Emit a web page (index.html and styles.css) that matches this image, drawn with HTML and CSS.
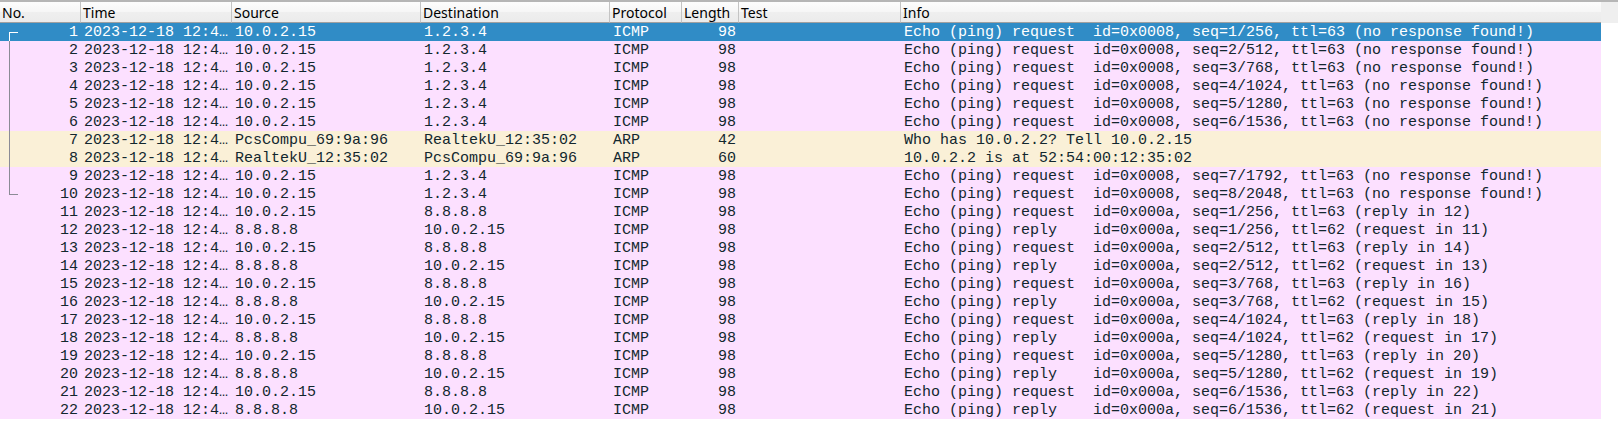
FILE: index.html
```html
<!DOCTYPE html>
<html lang="en">
<head>
<meta charset="utf-8">
<title>Packet list</title>
<link rel="stylesheet" href="styles.css">
</head>
<body>
<main class="packet-list">
<table class="packets">
<colgroup><col class="col-no"><col class="col-time"><col class="col-addr"><col class="col-addr"><col class="col-protocol"><col class="col-length"><col class="col-test"><col></colgroup>
<thead>
<tr><th>No.</th><th>Time</th><th>Source</th><th>Destination</th><th>Protocol</th><th>Length</th><th>Test</th><th>Info</th></tr>
</thead>
<tbody>
<tr class="selected"><td class="num link-start">1</td><td>2023-12-18 12:4…</td><td>10.0.2.15</td><td>1.2.3.4</td><td>ICMP</td><td class="num">98</td><td></td><td>Echo (ping) request  id=0x0008, seq=1/256, ttl=63 (no response found!)</td></tr>
<tr><td class="num link">2</td><td>2023-12-18 12:4…</td><td>10.0.2.15</td><td>1.2.3.4</td><td>ICMP</td><td class="num">98</td><td></td><td>Echo (ping) request  id=0x0008, seq=2/512, ttl=63 (no response found!)</td></tr>
<tr><td class="num link">3</td><td>2023-12-18 12:4…</td><td>10.0.2.15</td><td>1.2.3.4</td><td>ICMP</td><td class="num">98</td><td></td><td>Echo (ping) request  id=0x0008, seq=3/768, ttl=63 (no response found!)</td></tr>
<tr><td class="num link">4</td><td>2023-12-18 12:4…</td><td>10.0.2.15</td><td>1.2.3.4</td><td>ICMP</td><td class="num">98</td><td></td><td>Echo (ping) request  id=0x0008, seq=4/1024, ttl=63 (no response found!)</td></tr>
<tr><td class="num link">5</td><td>2023-12-18 12:4…</td><td>10.0.2.15</td><td>1.2.3.4</td><td>ICMP</td><td class="num">98</td><td></td><td>Echo (ping) request  id=0x0008, seq=5/1280, ttl=63 (no response found!)</td></tr>
<tr><td class="num link">6</td><td>2023-12-18 12:4…</td><td>10.0.2.15</td><td>1.2.3.4</td><td>ICMP</td><td class="num">98</td><td></td><td>Echo (ping) request  id=0x0008, seq=6/1536, ttl=63 (no response found!)</td></tr>
<tr class="arp"><td class="num link">7</td><td>2023-12-18 12:4…</td><td>PcsCompu_69:9a:96</td><td>RealtekU_12:35:02</td><td>ARP</td><td class="num">42</td><td></td><td>Who has 10.0.2.2? Tell 10.0.2.15</td></tr>
<tr class="arp"><td class="num link">8</td><td>2023-12-18 12:4…</td><td>RealtekU_12:35:02</td><td>PcsCompu_69:9a:96</td><td>ARP</td><td class="num">60</td><td></td><td>10.0.2.2 is at 52:54:00:12:35:02</td></tr>
<tr><td class="num link">9</td><td>2023-12-18 12:4…</td><td>10.0.2.15</td><td>1.2.3.4</td><td>ICMP</td><td class="num">98</td><td></td><td>Echo (ping) request  id=0x0008, seq=7/1792, ttl=63 (no response found!)</td></tr>
<tr><td class="num link-end">10</td><td>2023-12-18 12:4…</td><td>10.0.2.15</td><td>1.2.3.4</td><td>ICMP</td><td class="num">98</td><td></td><td>Echo (ping) request  id=0x0008, seq=8/2048, ttl=63 (no response found!)</td></tr>
<tr><td class="num">11</td><td>2023-12-18 12:4…</td><td>10.0.2.15</td><td>8.8.8.8</td><td>ICMP</td><td class="num">98</td><td></td><td>Echo (ping) request  id=0x000a, seq=1/256, ttl=63 (reply in 12)</td></tr>
<tr><td class="num">12</td><td>2023-12-18 12:4…</td><td>8.8.8.8</td><td>10.0.2.15</td><td>ICMP</td><td class="num">98</td><td></td><td>Echo (ping) reply    id=0x000a, seq=1/256, ttl=62 (request in 11)</td></tr>
<tr><td class="num">13</td><td>2023-12-18 12:4…</td><td>10.0.2.15</td><td>8.8.8.8</td><td>ICMP</td><td class="num">98</td><td></td><td>Echo (ping) request  id=0x000a, seq=2/512, ttl=63 (reply in 14)</td></tr>
<tr><td class="num">14</td><td>2023-12-18 12:4…</td><td>8.8.8.8</td><td>10.0.2.15</td><td>ICMP</td><td class="num">98</td><td></td><td>Echo (ping) reply    id=0x000a, seq=2/512, ttl=62 (request in 13)</td></tr>
<tr><td class="num">15</td><td>2023-12-18 12:4…</td><td>10.0.2.15</td><td>8.8.8.8</td><td>ICMP</td><td class="num">98</td><td></td><td>Echo (ping) request  id=0x000a, seq=3/768, ttl=63 (reply in 16)</td></tr>
<tr><td class="num">16</td><td>2023-12-18 12:4…</td><td>8.8.8.8</td><td>10.0.2.15</td><td>ICMP</td><td class="num">98</td><td></td><td>Echo (ping) reply    id=0x000a, seq=3/768, ttl=62 (request in 15)</td></tr>
<tr><td class="num">17</td><td>2023-12-18 12:4…</td><td>10.0.2.15</td><td>8.8.8.8</td><td>ICMP</td><td class="num">98</td><td></td><td>Echo (ping) request  id=0x000a, seq=4/1024, ttl=63 (reply in 18)</td></tr>
<tr><td class="num">18</td><td>2023-12-18 12:4…</td><td>8.8.8.8</td><td>10.0.2.15</td><td>ICMP</td><td class="num">98</td><td></td><td>Echo (ping) reply    id=0x000a, seq=4/1024, ttl=62 (request in 17)</td></tr>
<tr><td class="num">19</td><td>2023-12-18 12:4…</td><td>10.0.2.15</td><td>8.8.8.8</td><td>ICMP</td><td class="num">98</td><td></td><td>Echo (ping) request  id=0x000a, seq=5/1280, ttl=63 (reply in 20)</td></tr>
<tr><td class="num">20</td><td>2023-12-18 12:4…</td><td>8.8.8.8</td><td>10.0.2.15</td><td>ICMP</td><td class="num">98</td><td></td><td>Echo (ping) reply    id=0x000a, seq=5/1280, ttl=62 (request in 19)</td></tr>
<tr><td class="num">21</td><td>2023-12-18 12:4…</td><td>10.0.2.15</td><td>8.8.8.8</td><td>ICMP</td><td class="num">98</td><td></td><td>Echo (ping) request  id=0x000a, seq=6/1536, ttl=63 (reply in 22)</td></tr>
<tr><td class="num">22</td><td>2023-12-18 12:4…</td><td>8.8.8.8</td><td>10.0.2.15</td><td>ICMP</td><td class="num">98</td><td></td><td>Echo (ping) reply    id=0x000a, seq=6/1536, ttl=62 (request in 21)</td></tr>
</tbody>
</table>
<div class="gutter"><div class="gutter-head"></div></div>
</main>
</body>
</html>
```

FILE: styles.css
```css
body {
  margin: 0;
  background: #fff;
}

.packet-list {
  display: flex;
  border-top: 2px solid #b6b6b6;
}

.packets {
  flex: 1;
  min-width: 0;
  width: 100%;
  table-layout: fixed;
  border-spacing: 0;
  font: 15px/17px "Liberation Mono", monospace;
  color: #12272e;
}

.col-no { width: 81px; }
.col-time { width: 151px; }
.col-addr { width: 189px; }
.col-protocol { width: 72px; }
.col-length { width: 57px; }
.col-test { width: 162px; }

th {
  padding: 1px 2px 0;
  border-right: 1px solid #c4c4c4;
  border-bottom: 1px solid #a0a0a0;
  background: linear-gradient(#fdfdfd, #f6f6f6 50%, #efefef 50%, #ebebeb);
  font: 14px/19px "Noto Sans", sans-serif;
  color: #000;
  text-align: left;
  white-space: nowrap;
}

th:last-child { border-right: 0; }

td {
  height: 17px;
  padding: 1px 3px 0;
  background: #fce0ff;
  white-space: pre;
  overflow: hidden;
}

.num { text-align: right; }

.selected td {
  background: #308cc6;
  color: #fff;
}

.arp td { background: #faf0d7; }

/* Bracket that ties together the packets of one conversation */
.link-start,
.link,
.link-end {
  position: relative;
}

.link-start::before,
.link::before,
.link-end::before {
  content: "";
  box-sizing: border-box;
  position: absolute;
  left: 9px;
  top: 0;
  width: 9px;
  height: 18px;
  border-left: 1px solid #8b8b96;
}

.link-start::before {
  top: 9px;
  height: 9px;
  border-color: #fff;
  border-top: 1px solid #fff;
}

.link-end::before {
  height: 10px;
  border-bottom: 1px solid #8b8b96;
}

.gutter { width: 17px; }

.gutter-head {
  height: 21px;
  background: #efefef;
}
```
